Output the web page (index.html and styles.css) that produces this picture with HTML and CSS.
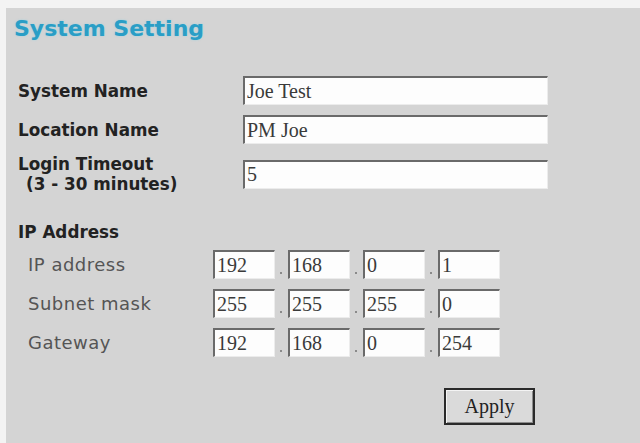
FILE: index.html
```
<!DOCTYPE html>
<html>
<head>
<meta charset="utf-8">
<link rel="stylesheet" href="styles.css">
</head>
<body>
<div class="page">
  <h1 class="title">System Setting</h1>

  <div class="row first">
    <div class="label">System Name</div>
    <input class="text" type="text" value="Joe Test">
  </div>
  <div class="row">
    <div class="label">Location Name</div>
    <input class="text" type="text" value="PM Joe">
  </div>
  <div class="row">
    <div class="label">Login Timeout<br><span class="indent">(3 - 30 minutes)</span></div>
    <input class="text" type="text" value="5">
  </div>

  <div class="section">IP Address</div>

  <div class="iprow top">
    <div class="sublabel">IP address</div>
    <input class="ip" type="text" value="192"><span class="dot"></span>
    <input class="ip" type="text" value="168"><span class="dot"></span>
    <input class="ip" type="text" value="0"><span class="dot"></span>
    <input class="ip" type="text" value="1">
  </div>
  <div class="iprow">
    <div class="sublabel">Subnet mask</div>
    <input class="ip" type="text" value="255"><span class="dot"></span>
    <input class="ip" type="text" value="255"><span class="dot"></span>
    <input class="ip" type="text" value="255"><span class="dot"></span>
    <input class="ip" type="text" value="0">
  </div>
  <div class="iprow">
    <div class="sublabel">Gateway</div>
    <input class="ip" type="text" value="192"><span class="dot"></span>
    <input class="ip" type="text" value="168"><span class="dot"></span>
    <input class="ip" type="text" value="0"><span class="dot"></span>
    <input class="ip" type="text" value="254">
  </div>

  <div class="actions">
    <button class="apply" type="button">Apply</button>
  </div>
</div>
</body>
</html>
```

FILE: styles.css
```
html, body {
  margin: 0;
  padding: 0;
  background: #f3f3f3;
}
.page {
  margin: 8px 0 0 6px;
  height: 435px;
  box-sizing: border-box;
  background: #d4d4d4;
  padding-top: 8px;
  font-family: "DejaVu Sans", Verdana, sans-serif;
  color: #222;
  overflow: hidden;
}
.title {
  margin: 0 0 0 8px;
  font-size: 22px;
  line-height: 26px;
  font-weight: bold;
  color: #2a9ec6;
  text-shadow: 0 0 2px rgba(120, 210, 235, 0.6);
}
.row {
  display: flex;
  align-items: center;
  margin-top: 10px;
  padding-left: 12px;
}
.row.first {
  margin-top: 34px;
}
.label {
  width: 225px;
  font-size: 16.8px;
  line-height: 20px;
  font-weight: bold;
  color: #222;
}
.indent {
  padding-left: 8px;
}
input {
  margin: 0;
  box-sizing: border-box;
  height: 29px;
  padding: 0 2px;
  font-family: "Liberation Serif", "Times New Roman", serif;
  font-size: 20px;
  color: #3a3a3a;
  background: #fdfdfd;
  border-top: 2px solid #6a6a6a;
  border-left: 2px solid #6a6a6a;
  border-right: 1px solid #ececec;
  border-bottom: 1px solid #ececec;
  outline: none;
}
.text {
  width: 305px;
}
.section {
  margin-top: 28px;
  padding-left: 12px;
  font-size: 16.8px;
  line-height: 20px;
  font-weight: bold;
  color: #222;
}
.iprow {
  display: flex;
  align-items: center;
  margin-top: 10px;
  padding-left: 12px;
}
.iprow.top {
  margin-top: 8px;
}
.sublabel {
  width: 185px;
  padding-left: 10px;
  font-size: 18px;
  line-height: 20px;
  color: #555;
  letter-spacing: 0.5px;
}
.ip {
  width: 62px;
}
.dot {
  width: 13px;
  height: 29px;
  position: relative;
}
.dot::after {
  content: "";
  position: absolute;
  left: 5px;
  bottom: 5px;
  width: 2px;
  height: 2px;
  background: #8a8a8a;
}
.actions {
  display: flex;
  margin-top: 31px;
  padding-left: 438px;
}
.apply {
  width: 91px;
  height: 37px;
  box-sizing: border-box;
  padding: 0;
  font-family: "Liberation Serif", "Times New Roman", serif;
  font-size: 20px;
  color: #222;
  background: #dadada;
  border: 2px solid #2a2a2a;
  box-shadow: inset 1px 1px 0 #f4f4f4, inset -1px -1px 0 #8c8c8c;
}
```
